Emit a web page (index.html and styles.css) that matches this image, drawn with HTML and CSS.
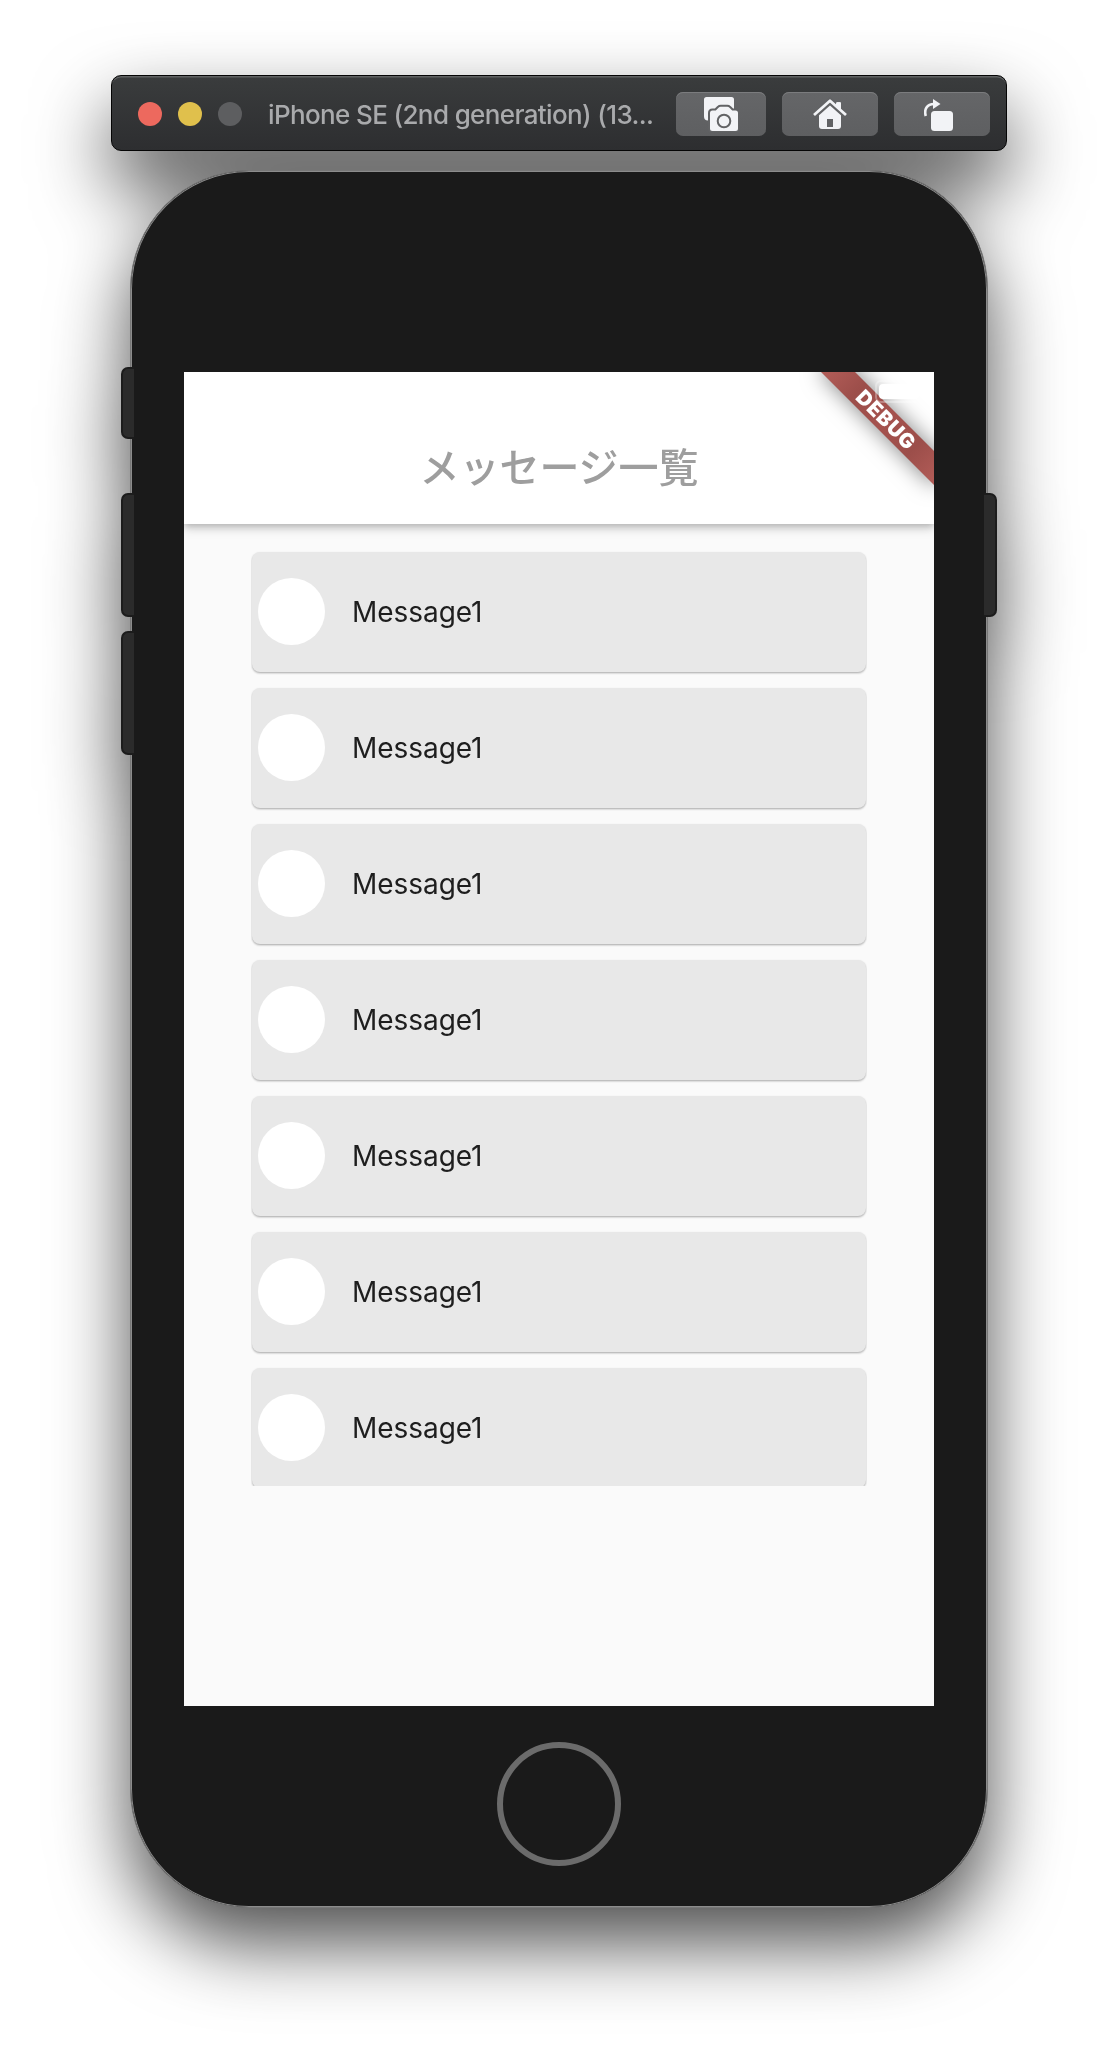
FILE: index.html
```html
<!DOCTYPE html>
<html lang="ja">
<head>
<meta charset="utf-8">
<title>メッセージ一覧</title>
<link rel="stylesheet" href="styles.css">
</head>
<body>
<div class="simulator">
  <header class="titlebar">
    <div class="lights"><i class="light close"></i><i class="light minimize"></i><i class="light zoom"></i></div>
    <div class="device-name">iPhone SE (2nd generation) (13...</div>
    <div class="tools">
      <button class="tool tool-shot" aria-label="Screenshot">
        <svg width="36" height="36" viewBox="0 0 36 36" fill="#f2f3f6">
          <path d="M3.500 1h25q2.500 0 2.500 2.500V16H12v8.500H5q-4 0-4-4v-17Q1 1 3.500 1z"/>
          <path d="M9.500 14.500h3.300l2.700-2.800q1-.9 2.200-.9h6.600q1.200 0 2.200.9l2.700 2.800h3.300q2.500 0 2.500 2.500v15.500q0 2.500-2.500 2.500h-23Q7 35 7 32.500V17q0-2.500 2.500-2.500z" fill="#626365" stroke="#626365" stroke-width="4"/>
          <path d="M9.500 14.500h3.300l2.700-2.800q1-.9 2.200-.9h6.600q1.200 0 2.200.9l2.700 2.800h3.300q2.500 0 2.500 2.500v15.500q0 2.500-2.500 2.500h-23Q7 35 7 32.500V17q0-2.500 2.500-2.500z"/>
          <circle cx="21" cy="25" r="6.300" fill="none" stroke="#626365" stroke-width="2"/>
        </svg>
      </button>
      <button class="tool" aria-label="Home">
        <svg width="36" height="36" viewBox="0 0 36 36" fill="#f2f3f6">
          <path d="M24 7.500q0-1.200 1.200-1.200h2.600q1.200 0 1.200 1.200V15l-5-4.500z"/>
          <path d="M2 19 18 4.800 34 19" fill="none" stroke="#626365" stroke-width="6"/>
          <path d="M24 7.500q0-1.200 1.200-1.200h2.600q1.200 0 1.200 1.200V15l-5-4.500z"/>
          <path d="M18 9.500 29 19.300V30q0 3-3 3H10q-3 0-3-3V19.300z"/>
          <path d="M2 19 18 4.800 34 19" fill="none" stroke="#f2f3f6" stroke-width="2.800" stroke-linejoin="round"/>
          <path d="M15 23h6v8h-6z" fill="#626365"/>
        </svg>
      </button>
      <button class="tool" aria-label="Rotate">
        <svg width="36" height="36" viewBox="0 0 36 36" fill="#f2f3f6">
          <rect x="7" y="15" width="22" height="20" rx="3.500"/>
          <path d="M1.800 20C-.2 13.500 3 8 10 8" fill="none" stroke="#f2f3f6" stroke-width="2.600"/>
          <path d="M9 3 16.500 8 9 13z"/>
        </svg>
      </button>
    </div>
  </header>

  <main class="phone">
    <span class="side-button mute"></span>
    <span class="side-button volume-up"></span>
    <span class="side-button volume-down"></span>
    <span class="side-button power"></span>
    <section class="screen">
      <div class="app-bar"><h1>メッセージ一覧</h1></div>
      <div class="debug-banner">DEBUG</div>
      <div class="battery"><i></i></div>
      <div class="message-list">
        <div class="card"><span class="avatar"></span><span>Message1</span></div>
        <div class="card"><span class="avatar"></span><span>Message1</span></div>
        <div class="card"><span class="avatar"></span><span>Message1</span></div>
        <div class="card"><span class="avatar"></span><span>Message1</span></div>
        <div class="card"><span class="avatar"></span><span>Message1</span></div>
        <div class="card"><span class="avatar"></span><span>Message1</span></div>
        <div class="card"><span class="avatar"></span><span>Message1</span></div>
      </div>
    </section>
    <div class="home-button"></div>
  </main>
</div>
</body>
</html>
```
FILE: styles.css
```css
* { box-sizing: border-box; }

body {
  margin: 0;
  background: #fff;
  font-family: Inter, "Noto Sans CJK JP", sans-serif;
}

.simulator {
  display: flex;
  flex-direction: column;
  align-items: center;
  gap: 19px;
  height: 2056px;
  padding-top: 75px;
  overflow: hidden;
  filter: drop-shadow(0 36px 38px rgba(0, 0, 0, .69));
}

/* Window title bar */
.titlebar {
  display: flex;
  align-items: center;
  width: 896px;
  height: 76px;
  padding: 0 16px 0 26px;
  border: 1px solid #050505;
  border-radius: 10px;
  background: linear-gradient(#3a3c3d, #2d2e30);
  box-shadow: inset 0 2px 0 -.5px #606263;
}

.lights { display: flex; gap: 16px; padding-top: 2px; }
.light { width: 24px; height: 24px; border-radius: 50%; }
.close { background: #ed695e; }
.minimize { background: #e0c04c; }
.zoom { background: #5d5e60; }

.device-name {
  flex: 1;
  padding: 3px 0 0 26px;
  color: #a9aaac;
  font-size: 26px;
  font-weight: 500;
  letter-spacing: -.63px;
  white-space: nowrap;
}

.tools { display: flex; gap: 16px; padding-top: 2px; }

.tool {
  display: flex;
  align-items: center;
  justify-content: center;
  width: 96px;
  height: 44px;
  padding: 0;
  border: 0;
  border-radius: 7px;
  background: linear-gradient(#656668, #5e5f61);
  box-shadow: inset 0 1px 0 #7b7c7e;
}
.tool-shot { width: 90px; }

/* Phone body */
.phone {
  position: relative;
  display: flex;
  flex-direction: column;
  align-items: center;
  width: 858px;
  height: 1738px;
  padding-top: 199px;
  border: 1px solid #777;
  border-radius: 119px;
  background: #1a1a1a;
  box-shadow: inset 0 0 0 1px #8c8c8c;
}

.side-button {
  position: absolute;
  left: -10px;
  width: 13px;
  height: 124px;
  border: 2px solid #1c1c1c;
  border-right: 0;
  border-radius: 7px 0 0 7px;
  background: #2b2b2b;
}
.mute { top: 196px; height: 72px; }
.volume-up { top: 322px; }
.volume-down { top: 460px; }
.power { top: 322px; left: 853px; transform: scaleX(-1); }

.home-button {
  width: 124px;
  height: 124px;
  margin-top: 36px;
  border: 6px solid #6b6b6b;
  border-radius: 50%;
}

/* App */
.screen {
  position: relative;
  flex: none;
  width: 750px;
  height: 1334px;
  margin-top: 2px;
  overflow: hidden;
  background: #fafafa;
}

.app-bar {
  position: relative;
  display: flex;
  align-items: center;
  justify-content: center;
  height: 152px;
  padding-top: 34px;
  background: #fff;
  box-shadow: 0 2px 7px rgba(0, 0, 0, .23), 0 6px 10px rgba(0, 0, 0, .1);
}

.app-bar h1 {
  margin: 0;
  color: #9e9e9e;
  font-family: "Noto Sans CJK JP", sans-serif;
  font-size: 40px;
  font-weight: 500;
  line-height: 56px;
}

.debug-banner {
  position: absolute;
  left: 622px;
  top: 36px;
  width: 160px;
  height: 24px;
  transform: rotate(45deg);
  background: linear-gradient(90deg, #b35d58, #9c4e4a 25%, #a5524e 50%, #9c4e4a 75%, #b35d58);
  box-shadow: 0 0 22px rgba(0, 0, 0, .5);
  color: #fff;
  font-size: 20.4px;
  font-weight: 900;
  letter-spacing: .8px;
  line-height: 24px;
  text-align: center;
}

.battery {
  position: absolute;
  left: 691px;
  top: 8px;
  width: 50px;
  height: 23px;
  padding: 2px;
  border: 2px solid rgba(255, 255, 255, .3);
  border-radius: 6px;
}
.battery i {
  display: block;
  width: 40px;
  height: 15px;
  border-radius: 4px;
  background: #fff;
}

.message-list {
  display: flex;
  flex-direction: column;
  gap: 16px;
  width: 616px;
  height: 962px;
  margin: 0 auto;
  padding: 28px 1px 0;
  overflow: hidden;
}

.card {
  display: flex;
  flex: none;
  align-items: center;
  gap: 27px;
  height: 120px;
  padding: 0 0 1px 6px;
  border-radius: 8px;
  background: #e8e8e8;
  box-shadow: 0 1px 2px rgba(0, 0, 0, .26), 0 2px 2px rgba(0, 0, 0, .06);
  color: #1e1e1e;
  font-size: 28px;
  letter-spacing: -.05px;
}

.avatar {
  width: 67px;
  height: 67px;
  border-radius: 50%;
  background: #fff;
}
```
